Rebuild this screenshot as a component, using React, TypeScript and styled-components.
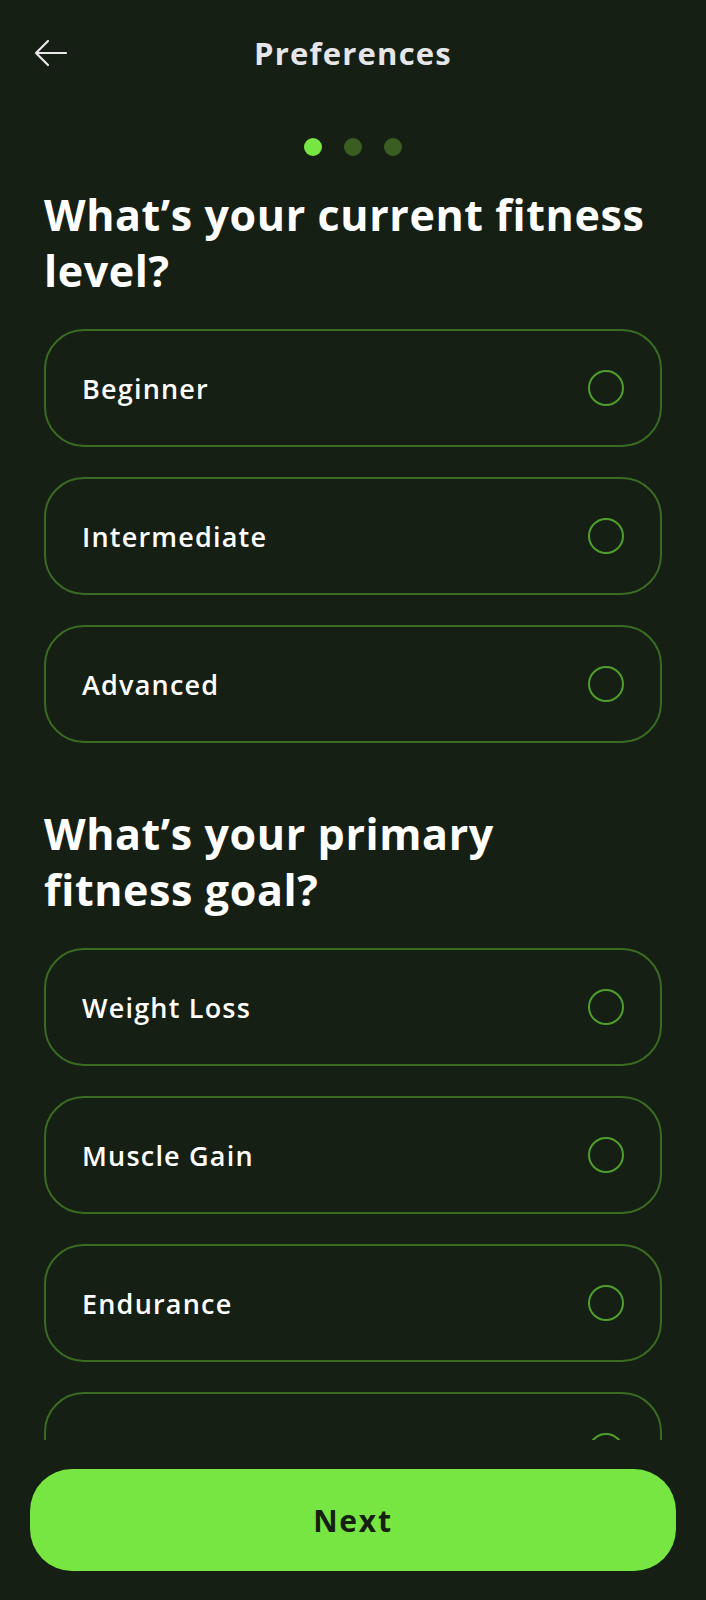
import React from "react";
import styled, { createGlobalStyle } from "styled-components";

const Global = createGlobalStyle`
  html, body { margin: 0; padding: 0; background: #161f13; }
  * { box-sizing: border-box; }
`;

const Screen = styled.div`
  width: 706px;
  height: 1600px;
  background: #161f13;
  display: flex;
  flex-direction: column;
  font-family: "Open Sans", "Noto Sans", sans-serif;
  color: #ffffff;
  overflow: hidden;
`;

const Header = styled.header`
  height: 106px;
  display: grid;
  grid-template-columns: 100px 1fr 100px;
  align-items: center;
  flex-shrink: 0;
`;

const BackButton = styled.button`
  background: none;
  border: none;
  padding: 0;
  margin-left: 34px;
  width: 34px;
  height: 28px;
  display: flex;
  align-items: center;
  cursor: pointer;
  color: #e9e9e9;
`;

const Title = styled.h1`
  margin: 0;
  text-align: center;
  font-size: 31px;
  font-weight: 700;
  color: #e6e6e8;
  letter-spacing: 1.2px;
`;

const Scroll = styled.main`
  flex: 1;
  overflow: hidden;
  padding: 0 44px;
  display: flex;
  flex-direction: column;
`;

const Dots = styled.div`
  display: flex;
  justify-content: center;
  gap: 22px;
  margin-top: 32px;
  margin-bottom: 31px;
`;

const Dot = styled.span<{ $active?: boolean }>`
  width: 18px;
  height: 18px;
  border-radius: 50%;
  background: ${(p) => (p.$active ? "#77e542" : "#3a5e22")};
`;

const Question = styled.h2<{ $top?: number }>`
  margin: ${(p) => p.$top ?? 0}px 0 30px;
  font-size: 43px;
  line-height: 56px;
  font-weight: 700;
  letter-spacing: 0.6px;
  color: #ffffff;
`;

const Options = styled.div`
  display: flex;
  flex-direction: column;
  gap: 30px;
`;

const Option = styled.label`
  height: 118px;
  border: 2px solid #3b6a23;
  border-radius: 40px;
  display: flex;
  align-items: center;
  justify-content: space-between;
  padding: 0 36px;
  font-size: 27px;
  font-weight: 600;
  letter-spacing: 1.2px;
  color: #ffffff;
  flex-shrink: 0;
`;

const Radio = styled.span`
  width: 36px;
  height: 36px;
  border-radius: 50%;
  border: 2.5px solid #4f9e2d;
`;

const Footer = styled.footer`
  flex-shrink: 0;
  padding: 29px 30px 29px;
`;

const NextButton = styled.button`
  width: 100%;
  height: 102px;
  border: none;
  border-radius: 42px;
  background: #77e542;
  color: #15200f;
  font-family: "Open Sans", sans-serif;
  font-size: 30px;
  font-weight: 700;
  letter-spacing: 1.8px;
  cursor: pointer;
`;

const levels = ["Beginner", "Intermediate", "Advanced"];
const goals = ["Weight Loss", "Muscle Gain", "Endurance", "Flexibility"];

export default function App() {
  return (
    <Screen>
      <Global />
      <Header>
        <BackButton aria-label="Back">
          <svg width="34" height="28" viewBox="0 0 34 28" fill="none">
            <path
              d="M32 14H3M14 2L2 14l12 12"
              stroke="currentColor"
              strokeWidth="2.2"
              strokeLinecap="round"
              strokeLinejoin="round"
            />
          </svg>
        </BackButton>
        <Title>Preferences</Title>
        <span />
      </Header>
      <Scroll>
        <Dots>
          <Dot $active />
          <Dot />
          <Dot />
        </Dots>
        <Question>
          What’s your current fitness
          <br />
          level?
        </Question>
        <Options>
          {levels.map((l) => (
            <Option key={l}>
              {l}
              <Radio />
            </Option>
          ))}
        </Options>
        <Question $top={63}>
          What’s your primary
          <br />
          fitness goal?
        </Question>
        <Options>
          {goals.map((g) => (
            <Option key={g}>
              {g}
              <Radio />
            </Option>
          ))}
        </Options>
      </Scroll>
      <Footer>
        <NextButton>Next</NextButton>
      </Footer>
    </Screen>
  );
}
